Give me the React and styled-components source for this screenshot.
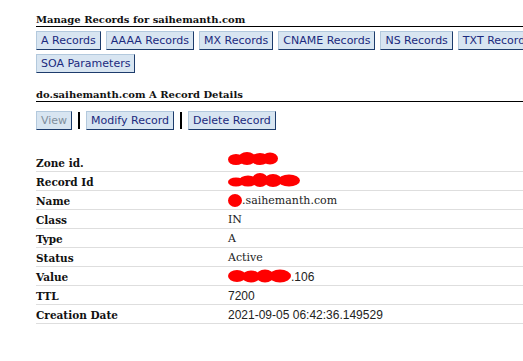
import React from "react";
import styled, { createGlobalStyle } from "styled-components";

const Global = createGlobalStyle`
  html, body { margin: 0; padding: 0; background: #fff; overflow: hidden; }
`;

const Page = styled.div`
  width: 620px;
  padding: 13px 0 0 36px;
  font-family: "DejaVu Serif", serif;
`;

const Heading = styled.h5`
  margin: ${(p) => p.$top || 0}px 0 0;
  font-size: 10px;
  font-weight: bold;
  color: #111;
  padding: 0;
  border-bottom: 1px solid #000;
  line-height: 13px;
`;

const ButtonRow = styled.div`
  display: flex;
  flex-wrap: wrap;
  align-items: center;
  gap: 4px 5px;
  width: 520px;
  margin-top: ${(p) => p.$top || 4}px;
`;

const Btn = styled.button`
  font-family: "DejaVu Sans", sans-serif;
  font-size: 11px;
  line-height: 13px;
  height: 19px;
  padding: 2px 4px;
  background: #d8e5f1;
  color: ${(p) => (p.$disabled ? "#7f8e9c" : "#1b2a7e")};
  border: 1px solid;
  border-color: #b3c9dd #1d3c6c #1d3c6c #b3c9dd;
  border-radius: 0;
  cursor: pointer;
  white-space: nowrap;
`;

const Sep = styled.span`
  width: 2px;
  height: 17px;
  background: #000;
  margin: 0 1px;
`;

const Table = styled.table`
  border-collapse: collapse;
  width: 600px;
  margin-top: 23px;
`;

const Row = styled.tr`
  border-bottom: 1px solid #dedede;
`;

const Label = styled.th`
  text-align: left;
  width: 192px;
  padding: 3px 0 1px;
  height: 14px;
  font-size: 10.5px;
  font-weight: bold;
  color: #111;
  line-height: 14px;
  vertical-align: top;
`;

const Value = styled.td`
  padding: 3px 0 1px;
  height: 14px;
  line-height: 14px;
  color: #222;
  font-family: ${(p) => (p.$sans ? '"Liberation Sans", Arial, sans-serif' : '"DejaVu Serif", serif')};
  font-size: ${(p) => (p.$sans ? "12px" : "11px")};
  white-space: nowrap;
  vertical-align: top;
`;

const Redact = styled.svg`
  display: inline-block;
  vertical-align: ${(p) => p.$dy || 0}px;
  margin-top: -8px;
`;

// red scribble made of overlapping ellipses: [cx, cy, rx, ry]
const Blob = ({ w, h, dy, parts }) => (
  <Redact width={w} height={h} viewBox={`0 0 ${w} ${h}`} $dy={dy}>
    {parts.map(([cx, cy, rx, ry], i) => (
      <ellipse key={i} cx={cx} cy={cy} rx={rx} ry={ry} fill="#ff0000" />
    ))}
  </Redact>
);

const rows = [
  {
    label: "Zone id.",
    value: (
      <Blob w={50} h={14} dy={0} parts={[[8, 7.5, 8, 5.5], [19, 6.5, 9, 6.5], [32, 7, 9, 6], [42, 6.5, 8, 6]]} />
    ),
  },
  {
    label: "Record Id",
    value: (
      <Blob
        w={72}
        h={15}
        dy={-2}
        parts={[[8, 10, 8, 4.5], [20, 9, 9, 5.5], [32, 8, 8, 7], [45, 8.5, 9, 6.5], [61, 8.5, 11, 6]]}
      />
    ),
  },
  {
    label: "Name",
    value: (
      <>
        <Blob w={14} h={13} dy={-3} parts={[[7, 6.5, 7, 6.5]]} />
        .saihemanth.com
      </>
    ),
  },
  { label: "Class", value: "IN" },
  { label: "Type", value: "A" },
  { label: "Status", value: "Active" },
  {
    label: "Value",
    sans: true,
    value: (
      <>
        <Blob w={63} h={14} dy={-2} parts={[[9, 7, 9, 6], [23, 7.5, 9, 6], [37, 7, 9, 6.5], [52, 7, 11, 6.5]]} />
        .106
      </>
    ),
  },
  { label: "TTL", sans: true, value: "7200" },
  { label: "Creation Date", sans: true, value: "2021-09-05 06:42:36.149529" },
];

const recordTabs = ["A Records", "AAAA Records", "MX Records", "CNAME Records", "NS Records", "TXT Records", "SOA Parameters"];

export default function App() {
  return (
    <Page>
      <Global />
      <Heading>Manage Records for saihemanth.com</Heading>
      <ButtonRow $top={4}>
        {recordTabs.map((t) => (
          <Btn key={t}>{t}</Btn>
        ))}
      </ButtonRow>

      <Heading $top={15}>do.saihemanth.com A Record Details</Heading>
      <ButtonRow $top={9}>
        <Btn $disabled>View</Btn>
        <Sep />
        <Btn>Modify Record</Btn>
        <Sep />
        <Btn>Delete Record</Btn>
      </ButtonRow>

      <Table>
        <tbody>
          {rows.map((r) => (
            <Row key={r.label}>
              <Label>{r.label}</Label>
              <Value $sans={r.sans}>{r.value}</Value>
            </Row>
          ))}
        </tbody>
      </Table>
    </Page>
  );
}
